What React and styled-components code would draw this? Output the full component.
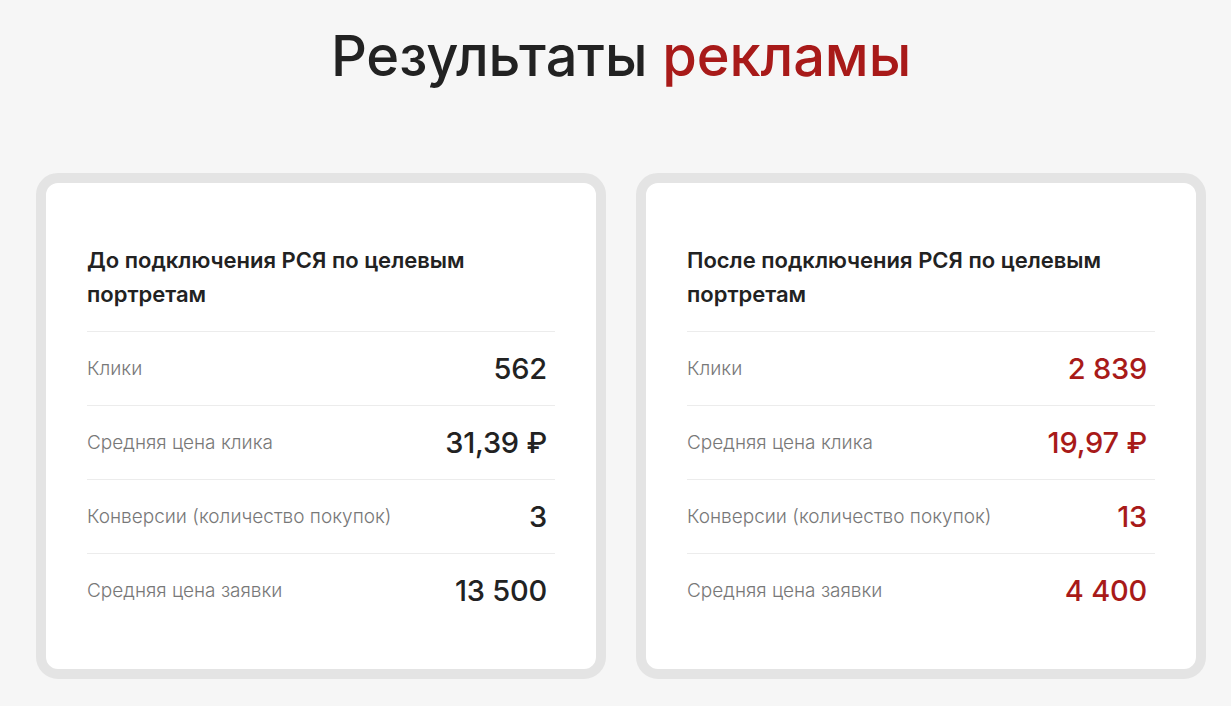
import React from "react";
import styled, { createGlobalStyle } from "styled-components";

const GlobalStyle = createGlobalStyle`
    html, body {
        margin: 0;
        padding: 0;
        background: #f6f6f6;
    }
    body {
        font-family: "Inter", "Noto Sans", sans-serif;
        color: #222;
    }
`;

const Page = styled.div`
    width: 1170px;
    margin-left: 36px;
    padding-top: 17px;
    box-sizing: border-box;
`;

const Title = styled.h1`
    margin: 0;
    text-align: center;
    font-size: 56px;
    font-weight: 500;
    letter-spacing: -0.1px;
    line-height: 78px;
    color: #222;
    & > span {
        color: #a81a19;
    }
`;

const Cards = styled.div`
    display: grid;
    grid-template-columns: 1fr 1fr;
    gap: 30px;
    margin-top: 78px;
`;

const Card = styled.div`
    background: #fff;
    border: 10px solid #e4e4e4;
    border-radius: 22px;
    padding: 60px 41px 42px;
`;

const CardTitle = styled.h3`
    margin: 0 0 20px;
    font-size: 22px;
    font-weight: 600;
    line-height: 34px;
    color: #222;
    padding-right: 12px;
`;

const Row = styled.div`
    display: flex;
    align-items: center;
    justify-content: space-between;
    height: 73px;
    border-top: 1px solid #ececec;
`;

const Label = styled.span`
    font-size: 19px;
    font-weight: 300;
    color: #787878;
`;

const Value = styled.span`
    font-size: 29px;
    font-weight: 500;
    letter-spacing: -0.2px;
    padding-right: 8px;
    color: ${(p) => (p.$accent ? "#a81a19" : "#222")};
`;

const rows = [
    "Клики",
    "Средняя цена клика",
    "Конверсии (количество покупок)",
    "Средняя цена заявки",
];

const before = ["562", "31,39 ₽", "3", "13 500"];
const after = ["2 839", "19,97 ₽", "13", "4 400"];

const ResultCard = ({ title, values, accent }) => (
    <Card>
        <CardTitle>{title}</CardTitle>
        {rows.map((label, i) => (
            <Row key={label}>
                <Label>{label}</Label>
                <Value $accent={accent}>{values[i]}</Value>
            </Row>
        ))}
    </Card>
);

const App = () => {
    return (
        <Page>
            <GlobalStyle />
            <Title>
                Результаты <span>рекламы</span>
            </Title>
            <Cards>
                <ResultCard title="До подключения РСЯ по целевым портретам" values={before} />
                <ResultCard title="После подключения РСЯ по целевым портретам" values={after} accent />
            </Cards>
        </Page>
    );
};

export default App;
